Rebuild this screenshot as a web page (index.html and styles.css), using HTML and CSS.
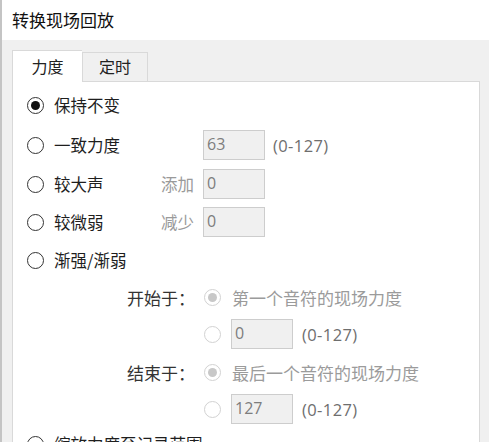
FILE: index.html
```html
<!DOCTYPE html>
<html lang="zh-CN">
<head>
<meta charset="utf-8">
<link rel="stylesheet" href="styles.css">
</head>
<body>
<div class="window">
  <div class="titlebar">转换现场回放</div>
  <div class="content">
    <div class="tabs">
      <div class="tab active">力度</div>
      <div class="tab">定时</div>
    </div>
    <div class="panel">
      <div class="row r1">
        <span class="radio checked"></span><span class="label">保持不变</span>
      </div>
      <div class="row r2">
        <span class="radio"></span><span class="label">一致力度</span><span class="sublabel"></span>
        <span class="field">63</span><span class="range">(0-127)</span>
      </div>
      <div class="row r3">
        <span class="radio"></span><span class="label">较大声</span><span class="sublabel">添加</span>
        <span class="field">0</span>
      </div>
      <div class="row r4">
        <span class="radio"></span><span class="label">较微弱</span><span class="sublabel">减少</span>
        <span class="field">0</span>
      </div>
      <div class="row r5">
        <span class="radio"></span><span class="label">渐强/渐弱</span>
      </div>
      <div class="row sub r6">
        <span class="sublead">开始于：</span>
        <span class="radio dis checked"></span><span class="distext">第一个音符的现场力度</span>
      </div>
      <div class="row sub r7">
        <span class="sublead"></span>
        <span class="radio dis"></span><span class="field small">0</span><span class="range wide">(0-127)</span>
      </div>
      <div class="row sub r8">
        <span class="sublead">结束于：</span>
        <span class="radio dis checked"></span><span class="distext">最后一个音符的现场力度</span>
      </div>
      <div class="row sub r9">
        <span class="sublead"></span>
        <span class="radio dis"></span><span class="field small">127</span><span class="range wide">(0-127)</span>
      </div>
      <div class="row r10">
        <span class="radio"></span><span class="label">缩放力度至记录范围</span>
      </div>
    </div>
  </div>
</div>
</body>
</html>
```
FILE: styles.css
```css
html, body {
  margin: 0;
  padding: 0;
}
body {
  width: 489px;
  height: 442px;
  overflow: hidden;
  background: #f0f0f0;
  font-family: "Noto Sans CJK SC", "Noto Sans", sans-serif;
}
.window {
  border-left: 2px solid #c4c4c4;
  height: 442px;
  box-sizing: border-box;
}
.titlebar {
  height: 40px;
  background: #ffffff;
  padding-left: 10px;
  font-size: 17px;
  line-height: 39px;
  color: #111;
}
.content {
  padding: 10px 0 0 10px;
}
.tabs {
  display: flex;
  align-items: flex-end;
  height: 31px;
  position: relative;
  z-index: 2;
}
.tab {
  box-sizing: border-box;
  height: 29px;
  width: 66px;
  border: 1px solid #d9d9d9;
  border-bottom: none;
  background: #f0f0f0;
  font-size: 16px;
  color: #222;
  text-align: center;
  line-height: 27px;
}
.tab.active {
  width: 70px;
  height: 32px;
  background: #ffffff;
  line-height: 30px;
  margin-bottom: -1px;
  border-right: none;
}
.panel {
  width: 468px;
  height: 400px;
  box-sizing: border-box;
  background: #ffffff;
  border: 1px solid #d9d9d9;
  padding: 8px 0 0 14px;
}
.row {
  display: flex;
  align-items: center;
  height: 30px;
  font-size: 16.5px;
  color: #1e1e1e;
}
.r2 { margin-top: 10px; }
.r3 { margin-top: 9px; }
.r4 { margin-top: 8px; }
.r5 { margin-top: 8px; }
.r6 { margin-top: 7px; }
.r7 { margin-top: 7px; }
.r8 { margin-top: 8px; }
.r9 { margin-top: 7px; }
.r10 { margin-top: 5px; }
.radio {
  box-sizing: border-box;
  width: 17px;
  height: 17px;
  border: 1px solid #333;
  border-radius: 50%;
  flex: none;
  display: flex;
  align-items: center;
  justify-content: center;
  background: #fff;
}
.radio.checked::after {
  content: "";
  width: 9px;
  height: 9px;
  border-radius: 50%;
  background: #111;
}
.radio.dis {
  border-color: #d2d2d2;
}
.radio.dis.checked::after {
  background: #c8c8c8;
}
.label {
  margin-left: 10px;
  width: 107px;
  flex: none;
  white-space: nowrap;
}
.r1 .label, .r5 .label, .r10 .label { width: auto; }
.sublabel {
  width: 42px;
  flex: none;
  color: #9a9a9a;
}
.field {
  box-sizing: border-box;
  width: 62px;
  height: 30px;
  flex: none;
  background: #f0f0f0;
  border: 1px solid #cdcdcd;
  padding-left: 3px;
  font-family: "Open Sans", "Noto Sans", sans-serif;
  font-size: 16px;
  line-height: 27px;
  color: #7d7d7d;
}
.range {
  margin-left: 8px;
  font-family: "Open Sans", "Noto Sans", sans-serif;
  font-size: 16.5px;
  color: #6e6e6e;
  letter-spacing: 0.4px;
}
.sub .sublead {
  margin-left: 100px;
  width: 77px;
  flex: none;
  font-size: 17px;
  color: #333;
}
.sub .radio { margin-left: 0; }
.distext {
  margin-left: 11px;
  font-size: 17px;
  color: #9b9b9b;
  white-space: nowrap;
}
.field.small {
  margin-left: 10px;
  width: 62px;
}
.range.wide {
  margin-left: 9px;
}
```
